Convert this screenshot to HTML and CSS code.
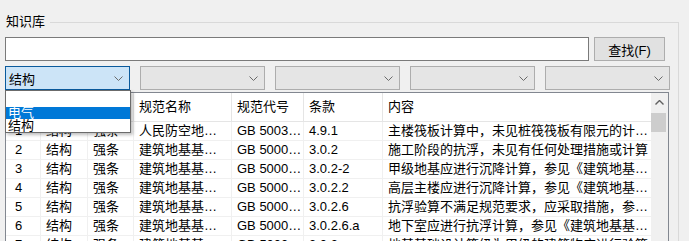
FILE: index.html
```html
<!DOCTYPE html>
<html lang="zh-CN">
<head>
    <meta charset="UTF-8">
    <title>知识库</title>
    <link rel="stylesheet" href="styles.css">
</head>
<body>
    <fieldset class="group">
        <legend>知识库</legend>

        <div class="search-row">
            <input class="search-input" type="text">
            <button class="find-btn">查找(F)</button>
        </div>

        <div class="filter-row">
            <div class="combo combo-open">
                <span>结构</span>
                <svg class="chevron" width="9" height="5" viewBox="0 0 9 5"><path d="M0.5 0.5 L4.5 4.5 L8.5 0.5" fill="none" stroke="#6a6a6a" stroke-width="1"/></svg>
                <div class="popup">
                    <div class="popup-item"></div>
                    <div class="popup-item active">电气</div>
                    <div class="popup-item">结构</div>
                </div>
            </div>
            <div class="combo">
                <span></span>
                <svg class="chevron" width="9" height="5" viewBox="0 0 9 5"><path d="M0.5 0.5 L4.5 4.5 L8.5 0.5" fill="none" stroke="#6a6a6a" stroke-width="1"/></svg>
            </div>
            <div class="combo">
                <span></span>
                <svg class="chevron" width="9" height="5" viewBox="0 0 9 5"><path d="M0.5 0.5 L4.5 4.5 L8.5 0.5" fill="none" stroke="#6a6a6a" stroke-width="1"/></svg>
            </div>
            <div class="combo">
                <span></span>
                <svg class="chevron" width="9" height="5" viewBox="0 0 9 5"><path d="M0.5 0.5 L4.5 4.5 L8.5 0.5" fill="none" stroke="#6a6a6a" stroke-width="1"/></svg>
            </div>
            <div class="combo">
                <span></span>
                <svg class="chevron" width="9" height="5" viewBox="0 0 9 5"><path d="M0.5 0.5 L4.5 4.5 L8.5 0.5" fill="none" stroke="#6a6a6a" stroke-width="1"/></svg>
            </div>
        </div>

        <div class="grid">
            <div class="grid-body">
                <div class="row head">
                    <div class="cell"></div>
                    <div class="cell"></div>
                    <div class="cell"></div>
                    <div class="cell">规范名称</div>
                    <div class="cell">规范代号</div>
                    <div class="cell">条款</div>
                    <div class="cell">内容</div>
                </div>
                <div class="row">
                    <div class="cell num">1</div>
                    <div class="cell">结构</div>
                    <div class="cell">强条</div>
                    <div class="cell">人民防空地…</div>
                    <div class="cell">GB 5003…</div>
                    <div class="cell">4.9.1</div>
                    <div class="cell">主楼筏板计算中，未见桩筏筏板有限元的计算书</div>
                </div>
                <div class="row">
                    <div class="cell num">2</div>
                    <div class="cell">结构</div>
                    <div class="cell">强条</div>
                    <div class="cell">建筑地基基…</div>
                    <div class="cell">GB 5000…</div>
                    <div class="cell">3.0.2</div>
                    <div class="cell">施工阶段的抗浮，未见有任何处理措施或计算</div>
                </div>
                <div class="row">
                    <div class="cell num">3</div>
                    <div class="cell">结构</div>
                    <div class="cell">强条</div>
                    <div class="cell">建筑地基基…</div>
                    <div class="cell">GB 5000…</div>
                    <div class="cell">3.0.2-2</div>
                    <div class="cell">甲级地基应进行沉降计算，参见《建筑地基基础》</div>
                </div>
                <div class="row">
                    <div class="cell num">4</div>
                    <div class="cell">结构</div>
                    <div class="cell">强条</div>
                    <div class="cell">建筑地基基…</div>
                    <div class="cell">GB 5000…</div>
                    <div class="cell">3.0.2.2</div>
                    <div class="cell">高层主楼应进行沉降计算，参见《建筑地基基础》</div>
                </div>
                <div class="row">
                    <div class="cell num">5</div>
                    <div class="cell">结构</div>
                    <div class="cell">强条</div>
                    <div class="cell">建筑地基基…</div>
                    <div class="cell">GB 5000…</div>
                    <div class="cell">3.0.2.6</div>
                    <div class="cell">抗浮验算不满足规范要求，应采取措施，参见规范</div>
                </div>
                <div class="row">
                    <div class="cell num">6</div>
                    <div class="cell">结构</div>
                    <div class="cell">强条</div>
                    <div class="cell">建筑地基基…</div>
                    <div class="cell">GB 5000…</div>
                    <div class="cell">3.0.2.6.a</div>
                    <div class="cell">地下室应进行抗浮计算，参见《建筑地基基础》</div>
                </div>
                <div class="row">
                    <div class="cell num">7</div>
                    <div class="cell">结构</div>
                    <div class="cell">强条</div>
                    <div class="cell">建筑地基基…</div>
                    <div class="cell">GB 5000…</div>
                    <div class="cell">3.0.3</div>
                    <div class="cell">地基基础设计等级为甲级的建筑物应进行验算</div>
                </div>
            </div>
            <div class="scrollbar">
                <svg class="arrow-up" width="9" height="5" viewBox="0 0 9 5"><path d="M0.5 4.5 L4.5 0.5 L8.5 4.5" fill="none" stroke="#606060" stroke-width="1.4"/></svg>
                <div class="thumb"></div>
            </div>
        </div>
    </fieldset>
</body>
</html>
```

FILE: styles.css
```css
body {
    margin: 0;
    height: 241px;
    background-color: #f0f0f0;
    font-family: 'Liberation Sans', 'Noto Sans CJK SC', sans-serif;
    font-size: 13px;
    color: #000;
    overflow: hidden;
}

/* Group box */
.group {
    width: 679px;
    height: 227px;
    box-sizing: border-box;
    margin: 14px 0 0 0;
    padding: 0 0 0 5px;
    border: 1px solid #d9d9d9;
    border-left: none;
    border-bottom: none;
    overflow: hidden;
}

.group legend {
    padding: 0 5px 0 6px;
    margin-left: -5px;
    font-size: 13px;
    line-height: 16px;
}

/* Search row */
.search-row {
    display: flex;
    gap: 5px;
    margin-top: 7px;
}

.search-input {
    width: 584px;
    height: 24px;
    box-sizing: border-box;
    margin: 0;
    border: 1px solid #7a7a7a;
    background-color: #fff;
}

.find-btn {
    width: 71px;
    height: 24px;
    box-sizing: border-box;
    margin: 0;
    padding: 0;
    border: 1px solid #adadad;
    background-color: #e1e1e1;
    font-family: inherit;
    font-size: 13px;
    color: #000;
}

/* Filter combos */
.filter-row {
    display: flex;
    gap: 10px;
    margin-top: 5px;
}

.combo {
    position: relative;
    width: 125px;
    height: 24px;
    box-sizing: border-box;
    display: flex;
    align-items: center;
    justify-content: space-between;
    padding: 0 6px 0 3px;
    border: 1px solid #adadad;
    background-color: #e5e5e5;
}

.combo-open {
    border-color: #0a5a9c;
    background-color: #cce4f7;
}

.popup {
    position: absolute;
    top: 23px;
    left: -1px;
    width: 126px;
    box-sizing: border-box;
    border: 1px solid #6b6b6b;
    background-color: #fff;
    box-shadow: 2px 2px 3px rgba(0,0,0,0.25);
    z-index: 5;
}

.popup-item {
    height: 13px;
    line-height: 13px;
    padding-left: 2px;
    font-size: 13px;
}

.popup-item:first-child {
    height: 16px;
}

.popup-item.active {
    height: 12px;
    line-height: 12px;
    background-color: #0078d7;
    color: #fff;
}

/* Data grid */
.grid {
    display: flex;
    width: 664px;
    height: 150px;
    box-sizing: border-box;
    margin-top: 2px;
    border: 1px solid #828790;
    border-bottom: none;
    background-color: #fff;
    overflow: hidden;
}

.grid-body {
    flex: 1;
}

.row {
    display: grid;
    grid-template-columns: 35px 47px 46px 98px 72px 79px 268px;
    height: 19px;
    border-bottom: 1px solid #f0f0f0;
    box-sizing: border-box;
}

.row.head {
    height: 29px;
    border-bottom: 1px solid #e5e5e5;
}

.cell {
    padding-left: 5px;
    line-height: 18px;
    white-space: nowrap;
    overflow: hidden;
    text-overflow: ellipsis;
    border-right: 1px solid #f0f0f0;
}

.head .cell {
    line-height: 28px;
    border-right-color: #e5e5e5;
}

.cell.num {
    padding-left: 9px;
}

.cell:last-child {
    border-right: none;
}

.scrollbar {
    width: 17px;
    background-color: #f0f0f0;
}

.arrow-up {
    display: block;
    margin: 7px auto 0;
}

.thumb {
    width: 15px;
    height: 19px;
    margin: 8px 0 0 0;
    background-color: #cdcdcd;
}
```
